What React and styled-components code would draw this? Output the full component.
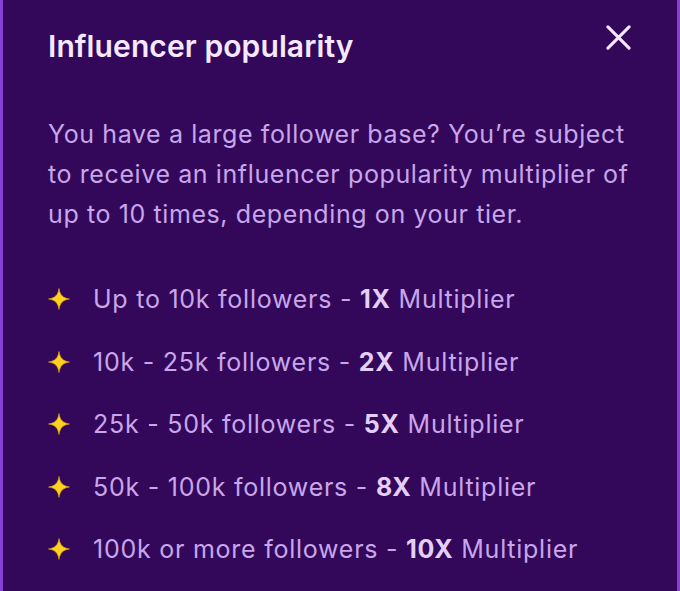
import styled, { createGlobalStyle } from "styled-components";

const GlobalStyle = createGlobalStyle`
  html, body {
    margin: 0;
    padding: 0;
    background: #33085a;
  }
`;

const Panel = styled.div`
  box-sizing: border-box;
  width: 680px;
  height: 591px;
  background: #33085a;
  border-left: 3px solid #8a3fd4;
  border-right: 3px solid #8a3fd4;
  padding: 24px 45px 0 45px;
  font-family: Inter, "Noto Sans", sans-serif;
  overflow: hidden;
`;

const Header = styled.div`
  display: flex;
  justify-content: space-between;
  align-items: flex-start;
`;

const Title = styled.h2`
  margin: 0;
  color: #f6e9ff;
  font-size: 30px;
  font-weight: 600;
  line-height: 44px;
  letter-spacing: 0.1px;
`;

const CloseBtn = styled.button`
  background: none;
  border: none;
  padding: 0;
  margin: -1px 0 0 0;
  width: 28px;
  height: 28px;
  display: flex;
  align-items: center;
  justify-content: center;
  cursor: pointer;
`;

const Text = styled.p`
  margin: 46px 0 0 0;
  color: #c7a6ea;
  font-size: 25px;
  line-height: 40px;
  letter-spacing: 0.6px;
`;

const List = styled.ul`
  list-style: none;
  margin: 45px 0 0 0;
  padding: 0;
  display: flex;
  flex-direction: column;
  gap: 22.5px;
`;

const Item = styled.li`
  display: flex;
  align-items: center;
  gap: 23px;
  color: #c7a6ea;
  font-size: 25px;
  line-height: 40px;
  letter-spacing: 0.75px;
`;

const Strong = styled.b`
  font-weight: 700;
  color: #e4cff8;
`;

const Star = () => (
  <svg width="22" height="22" viewBox="0 0 20 20">
    <path
      d="M10 0.5 C10.9 6.5 13.5 9.1 19.5 10 C13.5 10.9 10.9 13.5 10 19.5 C9.1 13.5 6.5 10.9 0.5 10 C6.5 9.1 9.1 6.5 10 0.5 Z"
      fill="#ffd21f"
      stroke="#e0a400"
      strokeWidth="0.6"
    />
  </svg>
);

const tiers = [
  ["Up to 10k followers - ", "1X"],
  ["10k - 25k followers - ", "2X"],
  ["25k - 50k followers - ", "5X"],
  ["50k - 100k followers - ", "8X"],
  ["100k or more followers - ", "10X"],
];

const App = () => {
  return (
    <>
      <GlobalStyle />
      <Panel>
        <Header>
          <Title>Influencer popularity</Title>
          <CloseBtn aria-label="Close">
            <svg width="25" height="25" viewBox="0 0 26 26">
              <path
                d="M2 2 L24 24 M24 2 L2 24"
                stroke="#f6e9ff"
                strokeWidth="3.2"
                strokeLinecap="round"
              />
            </svg>
          </CloseBtn>
        </Header>
        <Text>
          You have a large follower base? You’re subject to receive an
          influencer popularity multiplier of up to 10 times, depending on your
          tier.
        </Text>
        <List>
          {tiers.map(([label, mult]) => (
            <Item key={mult}>
              <Star />
              <span>
                {label}
                <Strong>{mult}</Strong> Multiplier
              </span>
            </Item>
          ))}
        </List>
      </Panel>
    </>
  );
};

export default App;
